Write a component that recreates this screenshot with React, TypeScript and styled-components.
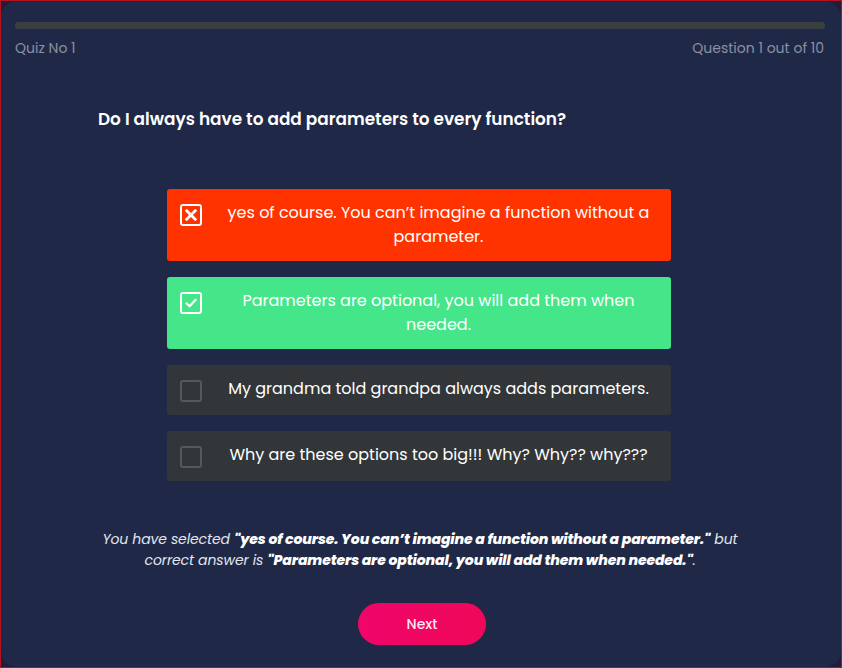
import React from "react";
import styled, { createGlobalStyle } from "styled-components";

const Global = createGlobalStyle`
  html, body { margin: 0; padding: 0; }
  body {
    background: #221b3c;
    font-family: "Poppins", "Open Sans", "Noto Sans", sans-serif;
  }
  * { box-sizing: border-box; }
`;

const Frame = styled.div`
  width: 842px;
  height: 668px;
  border: 1px solid #b3121f;
  background: #221b3c;
  display: flex;
`;

const Card = styled.div`
  flex: 1;
  background: #1f2947;
  border-radius: 16px;
  padding: 21px 16px 0 14px;
  display: flex;
  flex-direction: column;
`;

const Progress = styled.div`
  height: 7px;
  border-radius: 4px;
  background: #3a3f41;
`;

const Meta = styled.div`
  margin-top: 9px;
  display: flex;
  justify-content: space-between;
  font-size: 14px;
  line-height: 20px;
  color: #8b90a2;
  padding-right: 1px;
`;

const Question = styled.h2`
  margin: 48px 0 0 83px;
  font-size: 16.9px;
  font-weight: 600;
  line-height: 26px;
  color: #ffffff;
`;

const Options = styled.div`
  margin: 57px auto 0;
  width: 504px;
  display: flex;
  flex-direction: column;
  gap: 16px;
  transform: translateX(-1px);
`;

const Option = styled.div<{ $variant: "wrong" | "right" | "idle" }>`
  display: flex;
  align-items: flex-start;
  padding: 12px 12px 12px 13px;
  min-height: 50px;
  border-radius: 3px;
  gap: 16px;
  background: ${(p) =>
    p.$variant === "wrong" ? "#ff3300" : p.$variant === "right" ? "#45e58a" : "#333639"};
`;

const Box = styled.div<{ $idle?: boolean }>`
  flex: 0 0 22px;
  width: 22px;
  height: 22px;
  margin-top: 3px;
  border-radius: 3px;
  border: 2px solid ${(p) => (p.$idle ? "#55585c" : "#ffffff")};
  display: flex;
  align-items: center;
  justify-content: center;
`;

const OptionText = styled.div`
  flex: 1;
  text-align: center;
  color: #ffffff;
  font-size: 16px;
  line-height: 24px;
`;

const Feedback = styled.p`
  margin: 48px auto 0;
  width: 670px;
  text-align: center;
  font-style: italic;
  font-size: 14px;
  line-height: 21px;
  color: #e4e6ee;
  letter-spacing: -0.1px;

  b {
    font-weight: 800;
    color: #ffffff;
  }
`;

const NextButton = styled.button`
  margin: 32px auto 0;
  width: 128px;
  height: 42px;
  border: none;
  border-radius: 21px;
  background: linear-gradient(90deg, #f0056a, #ef0859);
  color: #ffe7f2;
  font-family: inherit;
  font-size: 14px;
  font-weight: 500;
  cursor: pointer;
  transform: translateX(2px);
`;

const CrossIcon = () => (
  <svg width="12" height="12" viewBox="0 0 12 12">
    <path d="M1.8 1.8 L10.2 10.2 M10.2 1.8 L1.8 10.2" stroke="#fff" strokeWidth="2.8" strokeLinecap="square" />
  </svg>
);

const CheckIcon = () => (
  <svg width="12" height="12" viewBox="0 0 12 12">
    <path d="M1.5 6.3 L4.6 9.3 L10.6 2.8" stroke="#fff" strokeWidth="2.2" fill="none" strokeLinecap="round" strokeLinejoin="round" />
  </svg>
);

const options: { text: string; variant: "wrong" | "right" | "idle" }[] = [
  { text: "yes of course. You can\u2019t imagine a function without a parameter.", variant: "wrong" },
  { text: "Parameters are optional, you will add them when needed.", variant: "right" },
  { text: "My grandma told grandpa always adds parameters.", variant: "idle" },
  { text: "Why are these options too big!!! Why? Why?? why???", variant: "idle" },
];

export default function App() {
  return (
    <>
      <Global />
      <Frame>
        <Card>
          <Progress />
          <Meta>
            <span>Quiz No 1</span>
            <span>Question 1 out of 10</span>
          </Meta>
          <Question>Do I always have to add parameters to every function?</Question>
          <Options>
            {options.map((o) => (
              <Option key={o.text} $variant={o.variant}>
                <Box $idle={o.variant === "idle"}>
                  {o.variant === "wrong" && <CrossIcon />}
                  {o.variant === "right" && <CheckIcon />}
                </Box>
                <OptionText>{o.text}</OptionText>
              </Option>
            ))}
          </Options>
          <Feedback>
            You have selected <b>"yes of course. You can’t imagine a function without a parameter."</b> but
            correct answer is <b>"Parameters are optional, you will add them when needed."</b>.
          </Feedback>
          <NextButton>Next</NextButton>
        </Card>
      </Frame>
    </>
  );
}
